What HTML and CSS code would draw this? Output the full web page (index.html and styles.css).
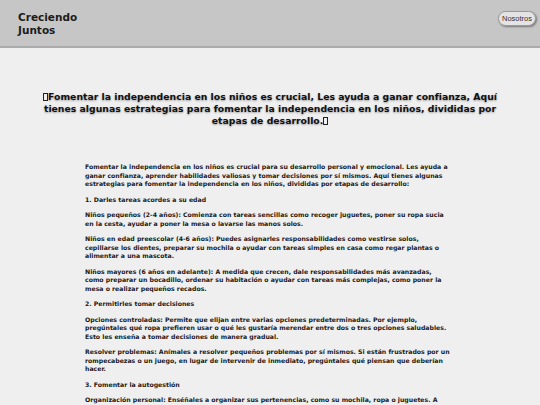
FILE: index.html
```html
<!DOCTYPE html>
<html lang="es">
<head>
<meta charset="utf-8">
<link rel="stylesheet" href="styles.css">
</head>
<body>
<header class="topbar">
  <div class="brand">Creciendo<br>Juntos</div>
  <button class="nav-btn">Nosotros</button>
</header>
<main class="content">
  <h1 class="title"><span class="tofu"></span>Fomentar la independencia en los niños es crucial, Les ayuda a ganar confianza, Aquí tienes algunas estrategias para fomentar la independencia en los niños, divididas por etapas de desarrollo.<span class="tofu"></span></h1>
  <article class="text">
    <p>Fomentar la independencia en los niños es crucial para su desarrollo personal y emocional. Les ayuda a ganar confianza, aprender habilidades valiosas y tomar decisiones por sí mismos. Aquí tienes algunas estrategias para fomentar la independencia en los niños, divididas por etapas de desarrollo:</p>
    <p>1. Darles tareas acordes a su edad</p>
    <p>Niños pequeños (2-4 años): Comienza con tareas sencillas como recoger juguetes, poner su ropa sucia en la cesta, ayudar a poner la mesa o lavarse las manos solos.</p>
    <p>Niños en edad preescolar (4-6 años): Puedes asignarles responsabilidades como vestirse solos, cepillarse los dientes, preparar su mochila o ayudar con tareas simples en casa como regar plantas o alimentar a una mascota.</p>
    <p>Niños mayores (6 años en adelante): A medida que crecen, dale responsabilidades más avanzadas, como preparar un bocadillo, ordenar su habitación o ayudar con tareas más complejas, como poner la mesa o realizar pequeños recados.</p>
    <p>2. Permitirles tomar decisiones</p>
    <p>Opciones controladas: Permite que elijan entre varias opciones predeterminadas. Por ejemplo, pregúntales qué ropa prefieren usar o qué les gustaría merendar entre dos o tres opciones saludables. Esto les enseña a tomar decisiones de manera gradual.</p>
    <p>Resolver problemas: Anímales a resolver pequeños problemas por sí mismos. Si están frustrados por un rompecabezas o un juego, en lugar de intervenir de inmediato, pregúntales qué piensan que deberían hacer.</p>
    <p>3. Fomentar la autogestión</p>
    <p>Organización personal: Enséñales a organizar sus pertenencias, como su mochila, ropa o juguetes. A medida que crecen, pueden ser responsables de mantener su espacio ordenado y de preparar sus cosas.</p>
  </article>
</main>
</body>
</html>
```
FILE: styles.css
```css
html, body {
  margin: 0;
  padding: 0;
}
body {
  background: #efefef;
  font-family: "DejaVu Sans", sans-serif;
  color: #1a1a1a;
}
.topbar {
  height: 46px;
  background: #c6c6c6;
  border-bottom: 2px solid #ababab;
  display: flex;
  justify-content: space-between;
  align-items: flex-start;
  padding: 0 4px 0 18px;
}
.brand {
  margin-top: 11px;
  font-weight: bold;
  font-size: 10.5px;
  line-height: 12.5px;
  color: #1c1c1c;
}
.nav-btn {
  margin-top: 11px;
  font-family: "Liberation Sans", sans-serif;
  font-size: 7.5px;
  color: #333;
  background: #e4e4e4;
  border: 1px solid #9a9a9a;
  border-radius: 8px;
  padding: 2px 3px;
  box-shadow: 1px 1px 2px rgba(0,0,0,0.4);
  line-height: 9px;
}
.content {
  display: flex;
  flex-direction: column;
  align-items: center;
}
.title {
  margin: 43px 0 0;
  width: 480px;
  text-align: center;
  font-size: 9.3px;
  line-height: 12px;
  font-weight: bold;
  color: #111;
  text-shadow: 0 1px 2px rgba(0,0,0,0.35);
}
.tofu {
  display: inline-block;
  width: 5px;
  height: 8px;
  border: 1px solid #222;
  box-sizing: border-box;
  vertical-align: -1px;
}
.text {
  margin-top: 36px;
  width: 366px;
  margin-left: -4px;
  font-size: 6.2px;
  line-height: 8.6px;
  font-weight: bold;
  color: #1a1a1a;
}
.text p {
  margin: 0 0 6.8px;
}
```
